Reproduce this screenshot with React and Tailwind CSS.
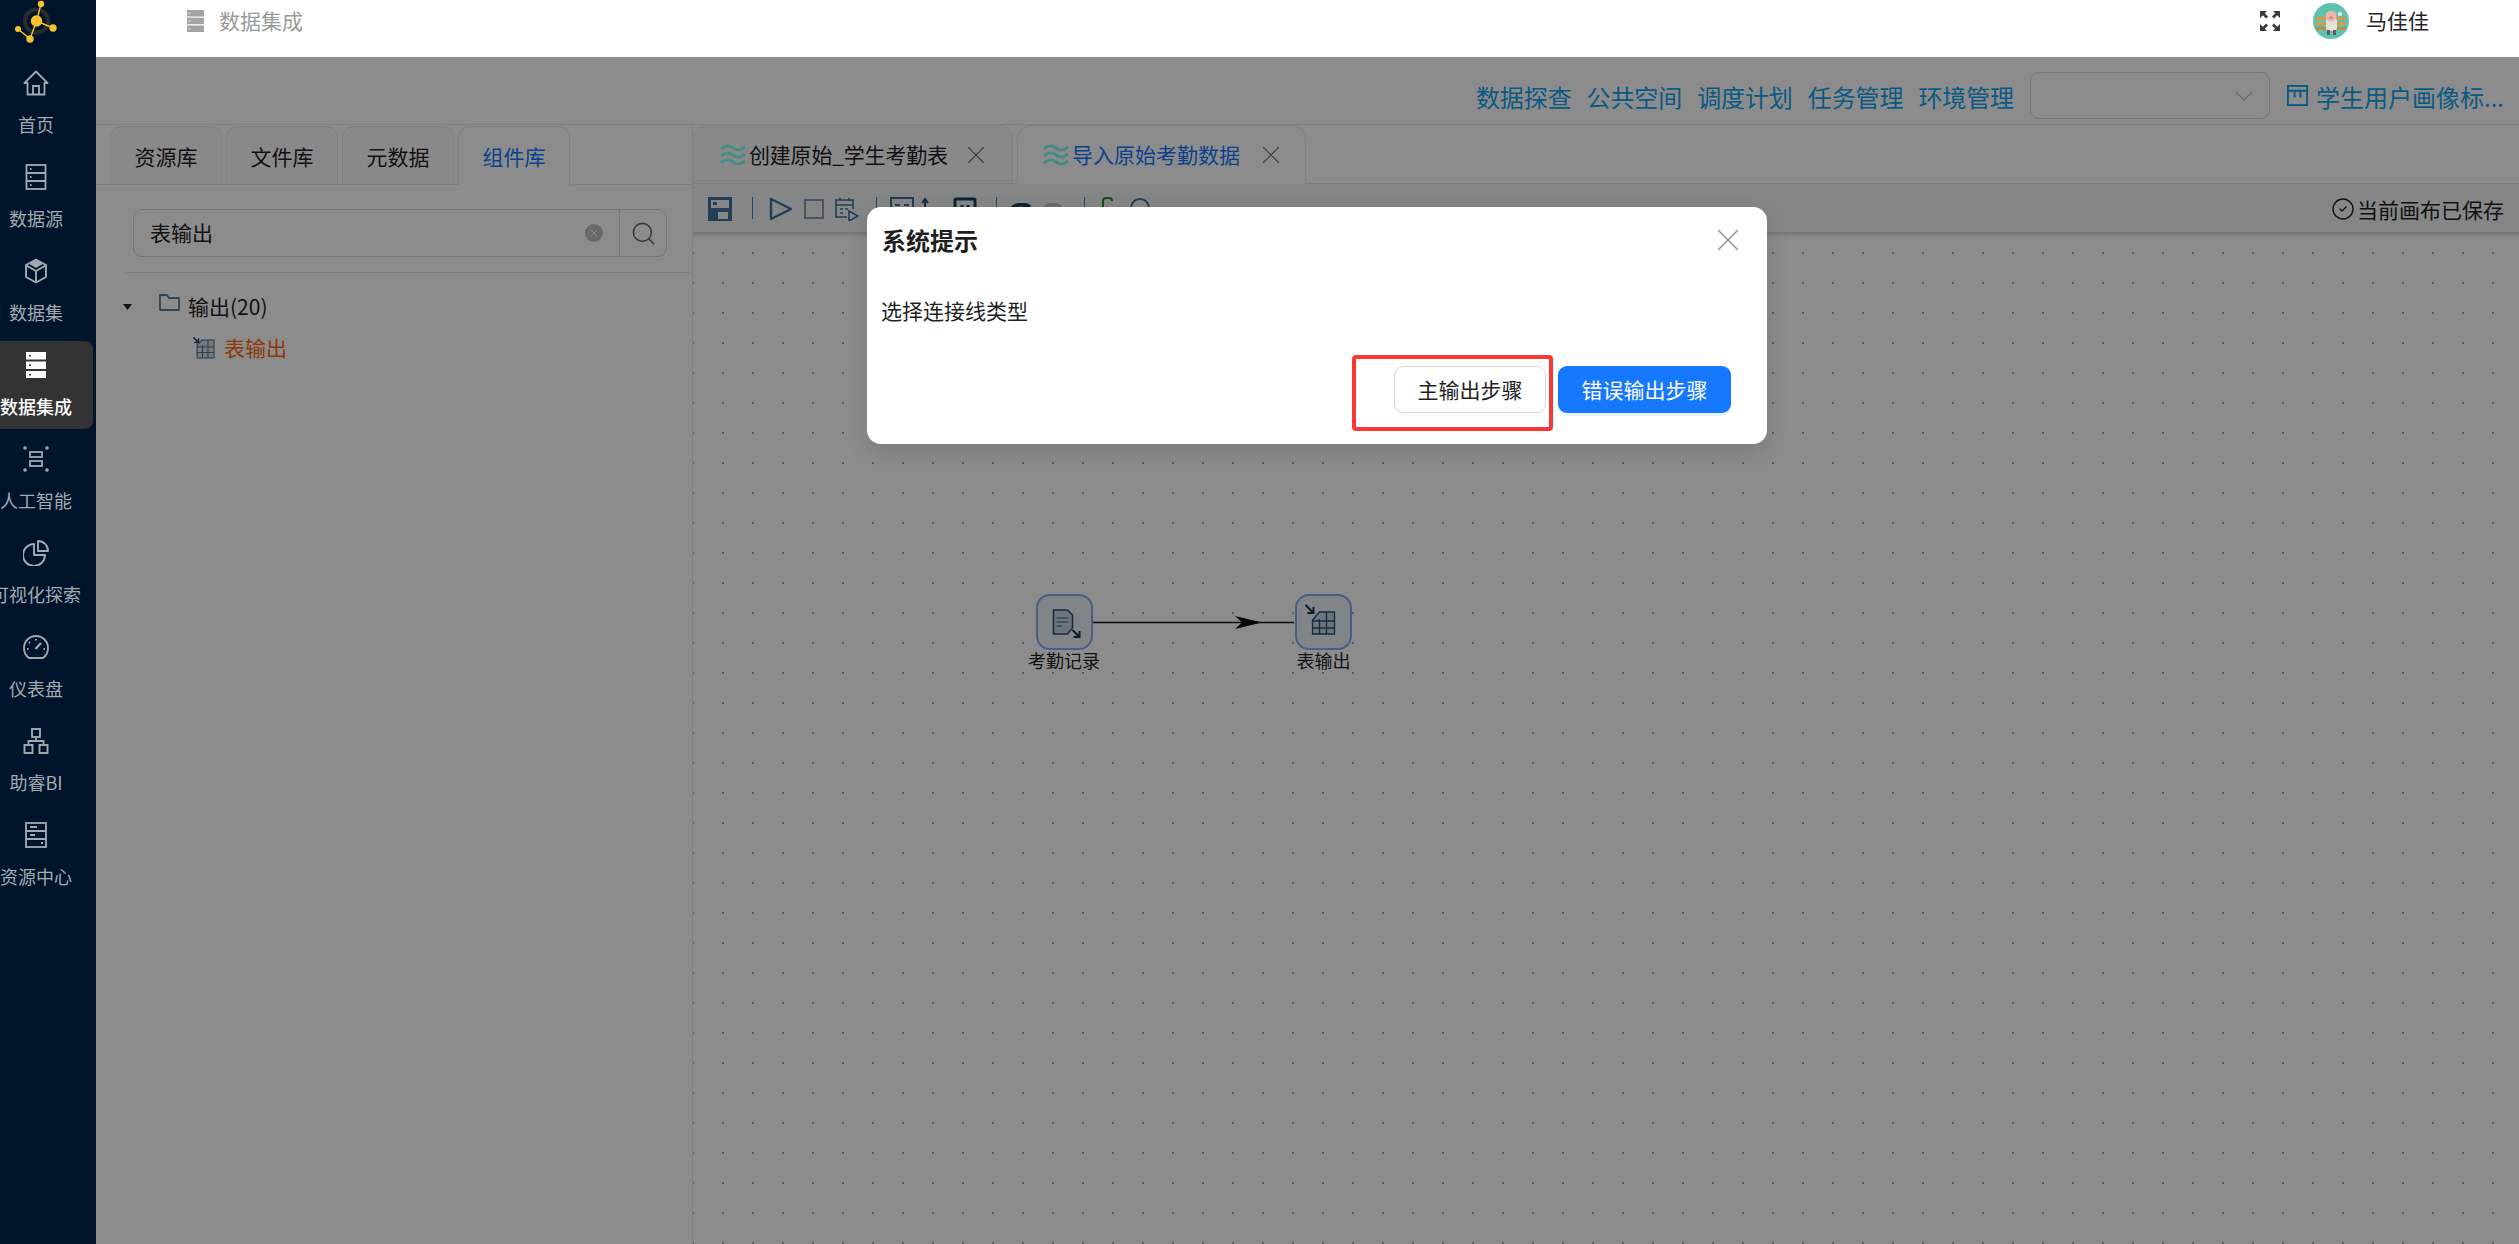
import React from 'react';
import { ChevronDown, CircleCheck, Search, X } from 'lucide-react';

const HomeIcon = () => (
  <svg viewBox="0 0 26 26" className="w-[26px] h-[26px]" fill="none" stroke="currentColor" strokeWidth="1.8">
    <path d="M13 1.5 L24.5 13 H21.5 V24.5 H4.5 V13 H1.5 Z" strokeLinejoin="round" />
    <path d="M10 24 V16 H16 V24" />
  </svg>
);

const SourceIcon = () => (
  <svg viewBox="0 0 26 26" className="w-[26px] h-[26px]" fill="none" stroke="currentColor" strokeWidth="1.8">
    <rect x="3.5" y="1" width="19" height="24" />
    <path d="M3.5 9 H22.5 M3.5 17 H22.5" />
    <path d="M7 5 H8.5 M7 13 H8.5 M7 21 H8.5" />
  </svg>
);

const CubeIcon = () => (
  <svg viewBox="0 0 26 26" className="w-[26px] h-[26px]" fill="none" stroke="currentColor" strokeWidth="1.9">
    <path d="M13 1.5 L23 7 V19 L13 24.5 L3 19 V7 Z" strokeLinejoin="round" />
    <path d="M3.5 7.5 L13 13 L22.5 7.5 M13 13 V24" />
    <path d="M13 2.5 L18 6 L13 9 L8 6 Z" fill="currentColor" />
  </svg>
);

const ActiveStackIcon = () => (
  <svg viewBox="0 0 26 26" className="w-[26px] h-[26px]">
    <rect x="3" y="0" width="20" height="7.5" fill="#fff" />
    <rect x="3" y="9.5" width="20" height="7.5" fill="#fff" />
    <rect x="3" y="19" width="20" height="7.5" fill="#fff" />
    <circle cx="7" cy="3.8" r="1" fill="#333" />
    <circle cx="7" cy="13.2" r="1" fill="#333" />
    <circle cx="7" cy="22.8" r="1" fill="#333" />
  </svg>
);

const AiIcon = () => (
  <svg viewBox="0 0 26 26" className="w-[26px] h-[26px]" fill="none" stroke="currentColor" strokeWidth="1.8">
    <circle cx="2" cy="2" r="1.8" fill="currentColor" stroke="none" />
    <circle cx="24" cy="2" r="1.8" fill="currentColor" stroke="none" />
    <circle cx="2" cy="24" r="1.8" fill="currentColor" stroke="none" />
    <circle cx="24" cy="24" r="1.8" fill="currentColor" stroke="none" />
    <rect x="7" y="6" width="12" height="5" />
    <rect x="7" y="15" width="12" height="5" />
  </svg>
);

const PieIcon = () => (
  <svg viewBox="0 0 26 26" className="w-[26px] h-[26px]" fill="none" stroke="currentColor" strokeWidth="1.9">
    <path d="M11 4 A11 11 0 1 0 22 15 H11 Z" strokeLinejoin="round" />
    <path d="M15 1 A10 10 0 0 1 25 11 H15 Z" strokeLinejoin="round" />
  </svg>
);

const GaugeIcon = () => (
  <svg viewBox="0 0 26 26" className="w-[26px] h-[26px]" fill="none" stroke="currentColor" strokeWidth="1.9">
    <path d="M6 24 H20 C23 22 25 18 25 14 A12 12 0 0 0 1 14 C1 18 3 22 6 24 Z" strokeLinejoin="round" />
    <path d="M12.5 15 L18 9" strokeWidth="2.2" />
    <path d="M13 5 V6.5 M6 8 L7 9 M4 15 H5.5 M20.5 15 H22" />
  </svg>
);

const TreeIcon = () => (
  <svg viewBox="0 0 26 26" className="w-[26px] h-[26px]" fill="none" stroke="currentColor" strokeWidth="1.9">
    <rect x="9" y="1" width="8" height="8" />
    <rect x="1.5" y="17" width="8" height="8" />
    <rect x="16.5" y="17" width="8" height="8" />
    <path d="M13 9 V13 M5.5 17 V13 H20.5 V17" />
  </svg>
);

const ResourceIcon = () => (
  <svg viewBox="0 0 26 26" className="w-[26px] h-[26px]" fill="none" stroke="currentColor" strokeWidth="1.8">
    <rect x="3" y="1" width="20" height="24" />
    <path d="M3 9 H23 M3 17 H23" />
    <path d="M7 5 H14 M7 13 H12 M18 21 H20" />
  </svg>
);

const navItems = [
  { label: '首页', Icon: HomeIcon },
  { label: '数据源', Icon: SourceIcon },
  { label: '数据集', Icon: CubeIcon },
  { label: '数据集成', Icon: ActiveStackIcon, active: true },
  { label: '人工智能', Icon: AiIcon },
  { label: '可视化探索', Icon: PieIcon },
  { label: '仪表盘', Icon: GaugeIcon },
  { label: '助睿BI', Icon: TreeIcon },
  { label: '资源中心', Icon: ResourceIcon },
];

const topLinks = ['数据探查', '公共空间', '调度计划', '任务管理', '环境管理'];
const libTabs = ['资源库', '文件库', '元数据', '组件库'];

function Logo() {
  return (
    <svg viewBox="0 0 96 59" className="w-[96px] h-[59px]">
      <circle cx="36.5" cy="21" r="11.5" fill="none" stroke="#2b2b2b" strokeWidth="4" />
      <path d="M36.5 21 L41 4 M36.5 21 L53 28 M36.5 21 L30 39 L18 29" stroke="#f5c22e" strokeWidth="1.4" fill="none" />
      <circle cx="36.5" cy="21" r="5.7" fill="#f5c22e" />
      <circle cx="41" cy="4" r="3.2" fill="#f5c22e" />
      <circle cx="53" cy="28" r="3.7" fill="#f5c22e" />
      <circle cx="30" cy="39" r="3.7" fill="#f5c22e" />
      <circle cx="18" cy="29" r="3" fill="#f5c22e" />
    </svg>
  );
}

function Sidebar() {
  return (
    <aside className="w-[96px] shrink-0 bg-[#00152b] overflow-hidden">
      <div className="h-[59px]">
        <Logo />
      </div>
      {navItems.map(({ label, Icon, active }) => (
        <div
          key={label}
          className={active
            ? 'w-[93px] h-[88px] mb-[6px] rounded-r-[8px] bg-[#333333] text-white font-medium'
            : 'w-[93px] h-[88px] mb-[6px] text-[#a3a9b0]'}
        >
          <div className="w-[72px] h-full pt-[11px] flex flex-col items-center">
            <Icon />
            <div className="mt-[15px] h-[26px] leading-[26px] text-[18px] whitespace-nowrap">{label}</div>
          </div>
        </div>
      ))}
    </aside>
  );
}

function Header() {
  return (
    <header className="h-[57px] shrink-0 bg-white flex items-center pl-[91px] pr-[90px] pb-[15px]">
      <svg viewBox="0 0 17 22" className="w-[17px] h-[22px]">
        <rect width="17" height="6.5" fill="#a3a3a3" />
        <rect y="7.7" width="17" height="6.5" fill="#a3a3a3" />
        <rect y="15.5" width="17" height="6.5" fill="#a3a3a3" />
        <circle cx="2.5" cy="3.2" r="0.8" fill="#fff" />
        <circle cx="2.5" cy="11" r="0.8" fill="#fff" />
        <circle cx="2.5" cy="18.7" r="0.8" fill="#fff" />
      </svg>
      <span className="ml-[15px] text-[21px] text-[#9a9a9a]">数据集成</span>
      <svg viewBox="0 0 20 20" className="ml-auto w-[20px] h-[20px] text-[#3a3a3a]" fill="currentColor">
        <path d="M0 0 H7 L4.8 2.2 L8 5.4 L6 7.4 L2.8 4.2 L0 7 Z" />
        <path d="M20 0 H13 L15.2 2.2 L12 5.4 L14 7.4 L17.2 4.2 L20 7 Z" />
        <path d="M0 20 H7 L4.8 17.8 L8 14.6 L6 12.6 L2.8 15.8 L0 13 Z" />
        <path d="M20 20 H13 L15.2 17.8 L12 14.6 L14 12.6 L17.2 15.8 L20 13 Z" />
      </svg>
      <svg viewBox="0 0 36 36" className="ml-[33px] w-[36px] h-[36px]">
        <circle cx="18" cy="18" r="18" fill="#5cc2b1" />
        <rect x="3" y="14" width="30" height="3" fill="#d99a45" />
        <rect x="3" y="19" width="30" height="3" fill="#d99a45" />
        <rect x="3" y="24" width="30" height="3" fill="#c98a3c" />
        <rect x="13" y="15" width="11" height="13" rx="3" fill="#e3e1dc" />
        <circle cx="18" cy="13" r="5.5" fill="#eeb6a6" />
        <ellipse cx="18" cy="14.5" rx="2.2" ry="1.5" fill="#d98f80" />
        <rect x="14" y="27" width="3" height="5" fill="#6b5a50" />
        <rect x="20" y="27" width="3" height="5" fill="#6b5a50" />
        <circle cx="27" cy="11" r="2" fill="#f3efe6" />
      </svg>
      <span className="ml-[17px] text-[21px] text-[#262626]">马佳佳</span>
    </header>
  );
}

function TopBar() {
  return (
    <div className="h-[68px] shrink-0 border-b border-[#ececec] flex justify-end items-start pt-[15px] pr-[15px]">
      {topLinks.map((link) => (
        <a key={link} className="mr-[15px] h-[47px] leading-[50px] text-[24px] tracking-[-0.1px] text-[#12a5f0]">{link}</a>
      ))}
      <div className="ml-[1px] w-[240px] h-[47px] border border-[#d9d9d9] rounded-[9px] flex items-center justify-end pr-[9px]">
        <ChevronDown className="w-[32px] h-[32px] text-[#bdbdbd]" strokeWidth={0.8} />
      </div>
      <svg viewBox="0 0 24 24" className="ml-[16px] mt-[12px] w-[23px] h-[23px] text-[#12a5f0]" fill="none" stroke="currentColor" strokeWidth="2">
        <rect x="2" y="2" width="20" height="20" />
        <path d="M2 7 H22 M9 7 V14 M15 7 V14" />
      </svg>
      <a className="ml-[7px] h-[47px] leading-[50px] text-[24px] text-[#12a5f0] whitespace-nowrap">学生用户画像标...</a>
    </div>
  );
}

function LeftPanel() {
  return (
    <div className="w-[596px] shrink-0 flex flex-col">
      <div className="mt-[1px] h-[59px] shrink-0 border-b border-[#e6e6e6] pl-[14px] flex gap-[4px] items-start">
        {libTabs.map((tab) => (
          <div
            key={tab}
            className={tab === '组件库'
              ? 'w-[112px] h-[59px] border border-b-0 border-[#ececec] rounded-t-[12px] bg-white text-center leading-[58px] text-[21px] text-[#1677ff]'
              : 'w-[112px] h-[58px] border border-b-0 border-[#ececec] rounded-t-[12px] bg-[#fafafa] text-center leading-[58px] text-[21px] text-[#1f1f1f]'}
          >
            {tab}
          </div>
        ))}
      </div>

      <div className="ml-[37px] mt-[24px] w-[534px] h-[48px] flex">
        <div className="flex-1 border border-[#d9d9d9] rounded-l-[9px] flex items-center pl-[16px] pr-[16px]">
          <span className="text-[21px] text-[#1f1f1f]">表输出</span>
          <span className="ml-auto w-[18px] h-[18px] rounded-full bg-[#bfbfbf] flex items-center justify-center">
            <X className="w-[12px] h-[12px] text-white" strokeWidth={2} />
          </span>
        </div>
        <div className="w-[47px] border border-l-0 border-[#d9d9d9] rounded-r-[9px] flex items-center justify-center">
          <Search className="w-[27px] h-[27px] text-[#6b6b6b]" strokeWidth={1.4} />
        </div>
      </div>

      <div className="ml-[29px] mt-[15px] h-px bg-[#ececec]" />

      <div className="mt-[13px] h-[41px] pl-[27px] flex items-center">
        <svg viewBox="0 0 9 6" className="w-[9px] h-[6px]"><path d="M0 0 H9 L4.5 6 Z" fill="#1f1f1f" /></svg>
        <svg viewBox="0 0 21 17" className="ml-[27px] mb-[9px] w-[21px] h-[17px]" fill="none" stroke="#5b7f9e" strokeWidth="1.8">
          <path d="M1 16 V1 H8 L10 4 H20 V16 Z" strokeLinejoin="round" />
        </svg>
        <span className="ml-[8px] text-[21px] leading-[41px] text-[#1f1f1f]">输出(20)</span>
      </div>
      <div className="h-[41px] pl-[97px] flex items-center">
        <svg viewBox="0 0 22 22" className="w-[22px] h-[22px]" fill="none" stroke="#4f7391" strokeWidth="1.1">
          <path d="M0.5 0.5 L5.5 5.5 M5.5 1.5 V5.5 H1.5" strokeWidth="1.5" stroke="#1d3b57" />
          <path d="M9 3 H21 V21 H4 V8 Z" fill="#d5dfe6" />
          <path d="M4 10 H21 M4 15.5 H21 M9.5 8 V21 M15 3 V21" />
        </svg>
        <span className="ml-[9px] text-[21px] leading-[41px] text-[#ff6a14]">表输出</span>
      </div>
    </div>
  );
}

function WaveIcon() {
  return (
    <svg viewBox="0 0 26 22" className="w-[26px] h-[22px]" fill="none" stroke="#80fff0" strokeWidth="3">
      <path d="M1 5 C6 1 9 1 13 4 C17 7 20 7 25 3" />
      <path d="M1 12 C6 8 9 8 13 11 C17 14 20 14 25 10" />
      <path d="M1 19 C6 15 9 15 13 18 C17 21 20 21 25 17" />
    </svg>
  );
}

function FlowTabs() {
  return (
    <div className="h-[59px] shrink-0 border-b border-[#e6e6e6] flex gap-[4px] items-start">
      <div className="w-[320px] h-[58px] border border-b-0 border-[#ececec] rounded-t-[14px] bg-[#fafafa] flex items-center pl-[26px] pr-[21px]">
        <WaveIcon />
        <span className="ml-[3px] text-[21px] tracking-[-0.2px] text-[#1f1f1f] whitespace-nowrap">创建原始_学生考勤表</span>
        <X className="ml-auto w-[30px] h-[30px] text-[#737373]" strokeWidth={0.9} />
      </div>
      <div className="w-[289px] h-[59px] border border-b-0 border-[#ececec] rounded-t-[14px] bg-white flex items-center pl-[25px] pr-[19px]">
        <WaveIcon />
        <span className="ml-[3px] text-[21px] text-[#1677ff] whitespace-nowrap">导入原始考勤数据</span>
        <X className="ml-auto w-[30px] h-[30px] text-[#737373]" strokeWidth={0.9} />
      </div>
    </div>
  );
}

function ToolbarDivider({ className }) {
  return <div className={'w-px h-[22px] bg-[#2f86c8] ' + className} />;
}

function FlowToolbar() {
  return (
    <div className="h-[48px] shrink-0 bg-[#f3f6f4] flex items-start pt-[13px] pl-[15px] pr-[15px]">
      <svg viewBox="0 0 24 24" className="w-[24px] h-[24px]" fill="#41719a">
        <path d="M0 0 H24 V24 H0 Z M3 3 V11 H21 V3 Z M10 15 V22 H20 V15 Z" fillRule="evenodd" />
        <rect x="5" y="5" width="4" height="3" />
      </svg>
      <ToolbarDivider className="ml-[20px]" />
      <svg viewBox="0 0 24 24" className="ml-[16px] w-[24px] h-[24px]" fill="none" stroke="#41719a" strokeWidth="2.4">
        <path d="M2 2 L22 12 L2 22 Z" strokeLinejoin="round" />
      </svg>
      <svg viewBox="0 0 20 20" className="ml-[11px] mt-[2px] w-[20px] h-[20px]" fill="none" stroke="#7e9db6" strokeWidth="2">
        <rect x="1" y="1" width="18" height="18" />
      </svg>
      <svg viewBox="0 0 24 24" className="ml-[11px] w-[24px] h-[24px]" fill="none" stroke="#41719a" strokeWidth="1.6">
        <path d="M12 20 H1 V3 H18 V12" />
        <path d="M1 8 H18 M5 1 V4 M14 1 V4 M5 12 H8 M10 12 H13 M5 16 H8" />
        <path d="M14 14 L23 19 L14 24 Z" />
      </svg>
      <ToolbarDivider className="ml-[17px]" />
      <svg viewBox="0 0 24 24" className="ml-[13px] w-[24px] h-[24px]" fill="none" stroke="#41719a" strokeWidth="2">
        <rect x="1" y="1" width="22" height="22" />
        <path d="M5 8 H10 M14 8 H19" />
      </svg>
      <svg viewBox="0 0 20 24" className="ml-[7px] w-[20px] h-[24px]" fill="none" stroke="#284f70" strokeWidth="2">
        <path d="M4 24 V2 M1 6 L4 2 L7 6 M16 24 V10 M13 20 L16 24 L19 20" />
      </svg>
      <svg viewBox="0 0 24 24" className="ml-[12px] w-[24px] h-[24px]" fill="none" stroke="#1d3f5e" strokeWidth="3">
        <rect x="2" y="2" width="20" height="20" rx="1" />
        <path d="M9 8 V16 M15 8 V16" />
      </svg>
      <ToolbarDivider className="ml-[19px]" />
      <svg viewBox="0 0 22 22" className="ml-[12px] mt-[6px] w-[22px] h-[22px]" fill="none" stroke="#1d3f5e" strokeWidth="4">
        <path d="M1 8 C5 1 15 0 21 4" />
      </svg>
      <svg viewBox="0 0 20 20" className="ml-[13px] mt-[6px] w-[20px] h-[20px]" fill="none" stroke="#c4c4c4" strokeWidth="4">
        <path d="M19 7 C15 1 6 0 1 4" />
      </svg>
      <ToolbarDivider className="ml-[20px]" />
      <svg viewBox="0 0 13 22" className="ml-[16px] w-[13px] h-[22px]" fill="none" stroke="#1f8f1f" strokeWidth="2">
        <path d="M2 20 V4 A3 3 0 0 1 5 1 H8 A3 3 0 0 1 11 4" />
      </svg>
      <svg viewBox="0 0 22 22" className="ml-[15px] w-[22px] h-[22px]" fill="none" stroke="#41719a" strokeWidth="2">
        <path d="M2 20 V11 A9 9 0 0 1 20 11 V20" />
      </svg>
      <div className="ml-auto mt-[-1px] flex items-center">
        <CircleCheck className="w-[24px] h-[24px] text-[#1f1f1f]" strokeWidth={1.4} />
        <span className="ml-[2px] text-[21px] leading-[26px] text-[#1f1f1f] whitespace-nowrap">当前画布已保存</span>
      </div>
    </div>
  );
}

function Canvas() {
  return (
    <div className="relative flex-1 bg-white bg-[radial-gradient(circle,#909090_0.6px,transparent_1px)] bg-[length:30px_30px] bg-[position:-15px_0px]">
      <div className="absolute left-[343px] top-[356px] w-[56px] flex flex-col items-center">
        <div className="w-[57px] h-[56px] shrink-0 rounded-[14px] border-2 border-[#85aef5] bg-[#ecf2f8]">
          <svg viewBox="2 2 52 52" className="w-[53px] h-[52px]" fill="none" stroke="#2a4e6e" strokeWidth="1.6">
            <path d="M17 16 H31 L36 21 V34 L31 40 H17 Z" fill="#c4d6e4" />
            <path d="M20 24 H32 M20 28 H32 M20 32 H26" stroke="#7f9cb4" strokeWidth="1.8" />
            <path d="M36 36 L43 43 M43 37 V43 H37" strokeWidth="2" stroke="#16344f" />
          </svg>
        </div>
        <div className="h-[20px] leading-[20px] text-[18px] text-[#1f1f1f] whitespace-nowrap">考勤记录</div>
      </div>

      <svg viewBox="0 0 202 16" className="absolute left-[400px] top-[376px] w-[202px] h-[16px]">
        <path d="M0 8.5 H201" stroke="#1a1a1a" strokeWidth="1.6" />
        <path d="M169 8.5 L142 2 L149 8.5 L142 15 Z" fill="#111" />
      </svg>

      <div className="absolute left-[602px] top-[356px] w-[57px] flex flex-col items-center">
        <div className="w-[57px] h-[56px] shrink-0 rounded-[14px] border-2 border-[#85aef5] bg-[#ecf2f8]">
          <svg viewBox="2 2 52 52" className="w-[53px] h-[52px]" fill="none" stroke="#2a4e6e" strokeWidth="1.3">
            <path d="M10 11 L18 19 M18 13 V19 H12" strokeWidth="2" stroke="#16344f" />
            <path d="M24 18 H39 V40 H17 V26 Z" fill="#c4d6e4" />
            <path d="M17 27 H39 M17 34 H39 M24 25 V40 M31 18 V40" />
          </svg>
        </div>
        <div className="h-[20px] leading-[20px] text-[18px] text-[#1f1f1f] whitespace-nowrap">表输出</div>
      </div>
    </div>
  );
}

function SystemDialog() {
  return (
    <div className="absolute left-[771px] top-[150px] w-[900px] h-[237px] rounded-[14px] bg-white shadow-[0_8px_24px_rgba(0,0,0,0.12)] flex flex-col">
      <div className="h-[66px] shrink-0 pl-[15px] pr-[20px] flex items-center justify-between">
        <span className="text-[24px] font-bold text-[#1f1f1f]">系统提示</span>
        <X className="w-[38px] h-[38px] text-[#8c8c8c]" strokeWidth={0.9} />
      </div>
      <div className="mt-[20px] pl-[14px] h-[34px] leading-[34px] text-[21px] text-[#1f1f1f]">选择连接线类型</div>
      <div className="mt-[39px] pr-[36px] flex justify-end gap-[12px]">
        <button className="w-[152px] h-[47px] rounded-[9px] border border-[#d9d9d9] bg-white text-[21px] text-[#1f1f1f] shadow-[0_3px_0_rgba(0,0,0,0.02)]">主输出步骤</button>
        <button className="w-[173px] h-[47px] rounded-[9px] bg-[#1677ff] text-[21px] text-white shadow-[0_3px_0_rgba(5,145,255,0.1)]">错误输出步骤</button>
      </div>
      {/* 红色标注框 */}
      <div className="absolute left-[485px] top-[148px] w-[201px] h-[76px] rounded-[4px] border-[4px] border-[#fb3636]" />
    </div>
  );
}

export default function App() {
  return (
    <div className="flex w-full h-screen overflow-hidden bg-white font-['Noto_Sans_CJK_SC','Liberation_Sans',sans-serif]">
      <Sidebar />
      <main className="flex-1 min-w-0 flex flex-col">
        <Header />
        <div className="relative flex-1 min-h-0 flex flex-col">
          <TopBar />
          <div className="flex-1 min-h-0 flex">
            <LeftPanel />
            <div className="flex-1 min-w-0 flex flex-col border-l border-[#ececec]">
              <FlowTabs />
              <FlowToolbar />
              <div className="h-[6px] shrink-0 bg-gradient-to-b from-[#d4d6d5] to-white" />
              <Canvas />
            </div>
          </div>
          <div className="absolute inset-0 bg-black/45" />
          <SystemDialog />
        </div>
      </main>
    </div>
  );
}
